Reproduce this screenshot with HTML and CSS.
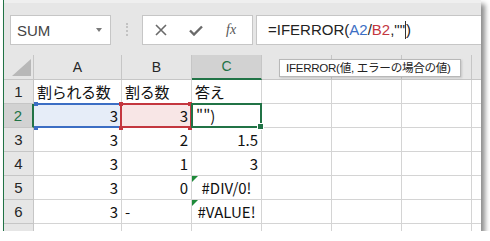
FILE: index.html
```html
<!DOCTYPE html>
<html lang="ja">
<head>
    <meta charset="UTF-8">
    <title>IFERROR</title>
    <link rel="stylesheet" href="styles.css">
</head>
<body>
    <div class="window">
        <div class="formula-bar">
            <div class="name-box"><span>SUM</span><span class="drop"></span></div>
            <div class="grip"></div>
            <div class="fx-buttons">
                <svg class="btn" width="12" height="12" viewBox="0 0 12 12"><path d="M1 1L11 11M11 1L1 11" stroke="#6a6a6a" stroke-width="1.6" fill="none"/></svg>
                <svg class="btn" width="14" height="11" viewBox="0 0 14 11"><path d="M1 5.5L5 9.5L13 1.5" stroke="#6a6a6a" stroke-width="2.4" fill="none"/></svg>
                <span class="fx">fx</span>
            </div>
            <div class="formula-input">=IFERROR(<span class="ref-blue">A2</span>/<span class="ref-red">B2</span>,""<span class="caret"></span>)</div>
        </div>

        <div class="sheet">
            <div class="corner"><svg width="20" height="18" viewBox="0 0 20 18"><path d="M19 0L19 17L0 17Z" fill="#b8b8b8"/></svg></div>
            <div class="hd">A</div>
            <div class="hd">B</div>
            <div class="hd sel">C</div>
            <div class="hd"></div>
            <div class="hd"></div>
            <div class="hd"></div>
            <div class="hd last"></div>

            <div class="rh">1</div>
            <div class="c jp">割られる数</div>
            <div class="c jp">割る数</div>
            <div class="c jp">答え</div>
            <div class="c"></div><div class="c"></div><div class="c"></div><div class="c last"></div>

            <div class="rh sel">2</div>
            <div class="c r ref-a">3</div>
            <div class="c r ref-b">3</div>
            <div class="c active">"")</div>
            <div class="c"></div><div class="c"></div><div class="c"></div><div class="c last"></div>

            <div class="rh">3</div>
            <div class="c r">3</div>
            <div class="c r">2</div>
            <div class="c r">1.5</div>
            <div class="c"></div><div class="c"></div><div class="c"></div><div class="c last"></div>

            <div class="rh">4</div>
            <div class="c r">3</div>
            <div class="c r">1</div>
            <div class="c r">3</div>
            <div class="c"></div><div class="c"></div><div class="c"></div><div class="c last"></div>

            <div class="rh">5</div>
            <div class="c r">3</div>
            <div class="c r">0</div>
            <div class="c ctr err">#DIV/0!</div>
            <div class="c"></div><div class="c"></div><div class="c"></div><div class="c last"></div>

            <div class="rh">6</div>
            <div class="c r">3</div>
            <div class="c">-</div>
            <div class="c ctr err">#VALUE!</div>
            <div class="c"></div><div class="c"></div><div class="c"></div><div class="c last"></div>

            <div class="rh">7</div>
            <div class="c"></div><div class="c"></div><div class="c"></div>
            <div class="c"></div><div class="c"></div><div class="c"></div><div class="c last"></div>
        </div>

        <div class="tooltip">IFERROR(値, エラーの場合の値)</div>
    </div>
</body>
</html>
```

FILE: styles.css
```css
*{margin: 0; padding: 0; box-sizing: border-box;}
body{background: #fff; font-family: "Liberation Sans", "Noto Sans CJK JP", sans-serif;}

.window{position: relative; margin-left: 3px; width: 478px; height: 231px; border-left: 1px solid #217346; background: #e6e6e6; overflow: hidden; box-shadow: 4px 4px 5px rgba(0, 0, 0, 0.45);}

/* formula bar */
.formula-bar{height: 55px; display: flex; align-items: flex-start; padding: 12px 0 0 6px; border-top: 3px solid #efefef;}
.name-box{width: 101px; height: 30px; background: #fff; border: 1px solid #c6c6c6; display: flex; align-items: center; justify-content: space-between; padding: 0 8px 0 6px; font-size: 15px; color: #444;}
.drop{width: 0; height: 0; border-top: 4px solid #7a7a7a; border-left: 3px solid transparent; border-right: 3px solid transparent;}
.grip{width: 2px; height: 13px; margin: 8px 0 0 15px; border-left: 2px dotted #c2c2c2;}
.fx-buttons{width: 111px; height: 30px; margin-left: 14px; background: #fff; border: 1px solid #c6c6c6; display: flex; align-items: center; padding-left: 12px; gap: 22px;}
.fx{font-family: "Liberation Serif", serif; font-style: italic; font-size: 14px; color: #555; margin-left: 1px;}
.formula-input{flex: 1; height: 30px; margin-left: 3px; background: #fff; border: 1px solid #c6c6c6; border-right: none; padding-left: 11px; font-size: 15px; line-height: 28px; color: #222; white-space: nowrap;}
.ref-blue{color: #3c6ec4;}
.ref-red{color: #c4373f;}
.caret{display: inline-block; width: 1px; height: 18px; background: #333; vertical-align: -4px;}

/* sheet grid */
.sheet{display: grid; grid-template-columns: 30px 88px 70px 70px 70px 70px 70px 9px; grid-template-rows: 25px repeat(7, 24px); background: #fff;}
.corner{background: #e6e6e6; border-right: 1px solid #c6c6c6; border-bottom: 1px solid #c6c6c6; display: flex; align-items: flex-end; justify-content: flex-end; padding: 0 1px 2px 0;}
.hd{background: #e6e6e6; border-right: 1px solid #c6c6c6; border-bottom: 1px solid #c6c6c6; text-align: center; font-size: 14px; line-height: 24px; color: #262626;}
.hd.sel{background: #d2d2d2; color: #217346; border-bottom: 2px solid #217346; line-height: 23px;}
.rh{background: #e6e6e6; border-right: 1px solid #c6c6c6; border-bottom: 1px solid #c6c6c6; text-align: center; font-size: 15px; line-height: 23px; color: #262626;}
.rh.sel{background: #d2d2d2; color: #217346; border-right: 2px solid #217346;}
.c{position: relative; border-right: 1px solid #d4d4d4; border-bottom: 1px solid #d4d4d4; font-family: "Noto Sans CJK JP", sans-serif; font-size: 15px; line-height: 23px; padding: 0 3px; color: #111; white-space: nowrap;}
.last{border-right: none;}
.r{text-align: right;}
.ctr{text-align: center;}
.jp{letter-spacing: -0.3px;}

/* error indicator */
.err::before{content: ""; position: absolute; left: 0; top: 0; border-top: 6px solid #1f8a3a; border-right: 6px solid transparent;}

/* reference highlight: frame + corner handles */
.ref-a{background: #e6edf8;}
.ref-a::after{content: ""; position: absolute; left: 0; top: -1px; right: -1px; bottom: -1px; border-top: 2px solid #3c6ec4; border-bottom: 2px solid #3c6ec4;}
.ref-a::before{content: ""; position: absolute; left: 0; top: -2px; width: 4px; height: 4px; background: #3c6ec4; box-shadow: 0 24px 0 #3c6ec4; z-index: 1;}
.ref-b{background: #f8e6e6;}
.ref-b::after{content: ""; position: absolute; left: -2px; top: -1px; right: -1px; bottom: -1px; border: 2px solid #c4373f; z-index: 1;}
.ref-b::before{content: ""; position: absolute; left: -3px; top: -2px; width: 4px; height: 4px; background: #c4373f; box-shadow: 0 24px 0 #c4373f, 69px 0 0 #c4373f, 69px 24px 0 #c4373f; z-index: 2;}

/* active cell */
.active{background: #fff; padding-left: 4px;}
.active::after{content: ""; position: absolute; left: -1px; top: -1px; right: -1px; bottom: -1px; border: 2px solid #217346; z-index: 2;}
.active::before{content: ""; position: absolute; right: -3px; bottom: -3px; width: 5px; height: 5px; background: #217346; border: 1px solid #fff; z-index: 3;}

/* tooltip */
.tooltip{position: absolute; left: 275px; top: 59px; width: 182px; height: 18px; background: #fff; border: 1px solid #b8b8b8; box-shadow: 1px 1px 2px rgba(0, 0, 0, 0.15); font-size: 11.6px; line-height: 16px; padding-left: 6px; color: #222; white-space: nowrap; letter-spacing: -0.3px;}
```
